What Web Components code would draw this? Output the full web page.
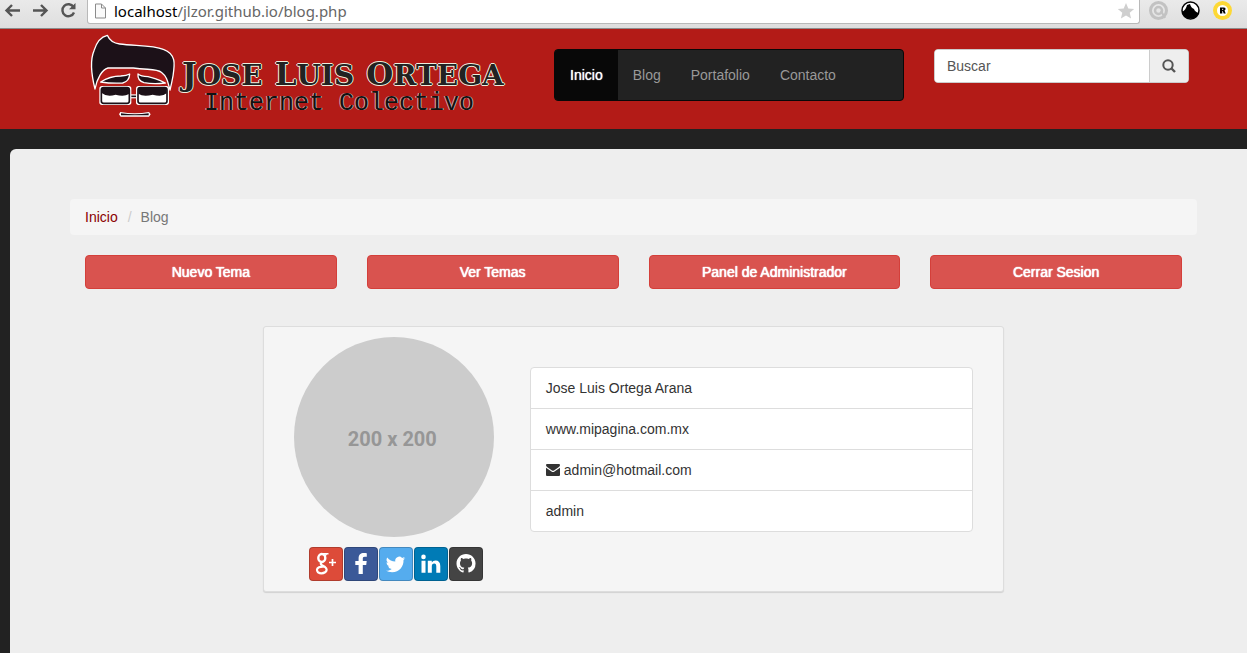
<!DOCTYPE html>
<html lang="es">
<head>
<meta charset="utf-8">
<meta name="viewport" content="width=device-width, initial-scale=1">
<title>Blog - Jose Luis Ortega</title>
<style>
body { margin: 0; background: #222; color: #333; font: 14px/20px "Liberation Sans", Arial, sans-serif; }
</style>
</head>
<body>
<blog-app></blog-app>

<template id="browser-bar">
<style>
:host { display: flex; height: 29px; box-sizing: border-box; background: linear-gradient(#eaeaea, #dedede); border-bottom: 1px solid #8c8c8c; font-family: "Noto Sans", "Open Sans", sans-serif; }
svg { display: block; flex: none; }
.tools { width: 87px; height: 24px; }
.address { flex: 1; display: flex; align-items: center; box-sizing: border-box; height: 24px; padding: 0 4px 2px 6px; background: #fff; border: 1px solid #b9b9b9; border-top: 0; border-radius: 0 0 3px 3px; }
.url { flex: 1; margin-left: 7px; font-size: 15px; line-height: 20px; color: #666; }
b { font-weight: 400; color: #000; }
</style>
<svg class="tools" viewBox="0 0 87 24" fill="none" stroke="#555" stroke-width="2.4" role="img" aria-label="Navegación">
<path d="M6 10.500H20M12 5L6.500 10.500L12 16M33 10.500H47M41 5L46.500 10.500L41 16"/>
<path d="M73.500 7A6 6 0 1 0 74 12.500"/><path d="M75.500 3V9.200H69Z" fill="#555" stroke="none"/>
</svg>
<div class="address">
<svg width="13" height="16" viewBox="0 0 13 16" fill="#fafafa" stroke="#8b8b8b"><path d="M1.500 1H7.500L11.500 5V15H1.500ZM7.500 1V5H11.500"/></svg>
<span class="url"><b>localhost</b>/jlzor.github.io/blog.php</span>
<svg width="18" height="18" viewBox="0 0 18 18"><path d="M9 1l2.300 5.400 5.900.5-4.500 3.800 1.400 5.800L9 13.400l-5.100 3.100 1.400-5.800L.8 6.900l5.900-.5z" fill="#cfcfcf"/></svg>
</div>
<svg width="107" height="24" viewBox="0 0 107 24">
<circle cx="18.500" cy="10.500" r="8" fill="none" stroke="#c2c2c2" stroke-width="3"/>
<circle cx="18.500" cy="10.500" r="3.500" fill="none" stroke="#c2c2c2" stroke-width="2.500"/><path d="M21 11l4 7" stroke="#c2c2c2" stroke-width="2"/>
<circle cx="50.500" cy="10.500" r="8.500" fill="#fff" stroke="#000" stroke-width="1.500"/><path d="M42 12Q46 10 47 5L50 4Q51 8 54 9Q55 12 59 13A9 9 0 0 1 42 12Z" fill="#000"/>
<circle cx="82.500" cy="10.500" r="9.500" fill="#fdd835"/><circle cx="82.500" cy="10.500" r="5.500" fill="#fff"/>
<path d="M80 7.500h4q2 0 1.500 2l-1 1 1.200 3h-2l-.9-2.500h-.5v2.500H80zM82.200 8.800v1.200h1v-1.200z" fill="#000" fill-rule="evenodd"/>
</svg>
</template>

<template id="site-logo">
<style>
:host { display: block; min-width: 0; }
a { display: flex; color: #222; text-decoration: none; white-space: nowrap; }
svg { display: block; flex: none; }
.text { padding-top: 29px; margin-left: 3px; }
.name { display: flex; gap: 12px; height: 34px; font: bold 28px/32px "DejaVu Serif", serif; text-transform: uppercase; text-shadow: 1px 0 #eed, -1px 0 #eed, 0 1px #eed, 0 -1px #eed; }
.name span { display: block; }
.name span::first-letter { font-size: 31px; line-height: 32px; }
.sub { display: block; padding-left: 22px; font: 25px/24px "Liberation Mono", monospace; color: #111; text-shadow: 1px 0 #c9a5a5, -1px 0 #c9a5a5; }
</style>
<a href="#inicio">
<svg width="100" height="100" viewBox="-3 -3 300 300" stroke-linejoin="round" aria-hidden="true">
<path d="M45 177C32 125 30 90 42 62C50 35 64 20 82 16C88 30 101 40 119 42C165 48 218 45 250 58C290 72 284 105 279 138Q275 160 270 180C263 155 262 141 244 127C232 116 210 120 160 114L84 114C66 119 51 145 45 177Z" fill="#1c1118" stroke="#fff" stroke-width="4"/>
<path d="M62 156Q90 138 122 138Q140 137 149 132Q148 154 128 159Q95 161 62 156ZM256 159Q225 144 204 140Q182 139 174 132Q172 152 192 158Q220 163 256 159Z" fill="#1c1118" stroke="#fff" stroke-width="4"/>
<path d="M148 199H174" stroke="#fff" stroke-width="12"/><path d="M145 199H176" stroke="#1c1118" stroke-width="5"/>
<rect x="58" y="168" width="96" height="57" rx="8" fill="#fff"/><rect x="168" y="168" width="99" height="57" rx="8" fill="#fff"/>
<rect x="64" y="173" width="84" height="47" rx="7" fill="#fff" stroke="#1c1118" stroke-width="5"/><rect x="174" y="173" width="87" height="47" rx="7" fill="#fff" stroke="#1c1118" stroke-width="5"/>
<path d="M65 174H147V192Q132 201 107 194Q81 202 65 189ZM175 174H260V190Q247 202 218 194Q190 202 175 191Z" fill="#1c1118"/>
<path d="M121 246Q165 254 207 246L212 253 207 260H122L117 253Z" fill="#fff"/><path d="M123 250Q165 256 206 250V256H123Z" fill="#1c1118"/>
</svg>
<span class="text">
<span class="name"><span>Jose</span><span>Luis</span><span>Ortega</span></span>
<span class="sub">Internet Colectivo</span>
</span>
</a>
</template>

<template id="main-nav">
<style>
nav { display: flex; overflow: hidden; border: 1px solid #080808; border-radius: 4px; background: #222; }
a { padding: 15px; color: #999; text-decoration: none; }
a.active { background: #080808; color: #fff; text-shadow: 0 0 1px #fff; }
</style>
<nav><a class="active" href="#inicio">Inicio</a><a href="#blog">Blog</a><a href="#portafolio">Portafolio</a><a href="#contacto">Contacto</a></nav>
</template>

<template id="search-box">
<style>
form { display: flex; height: 34px; box-sizing: border-box; border: 1px solid #ccc; border-radius: 4px; overflow: hidden; background: #fff; }
input { flex: 1; min-width: 0; border: 0; outline: 0; padding: 0 12px; background: #fff; color: #555; font: inherit; }
input::placeholder { color: #555; opacity: 1; }
button { display: grid; place-items: center; width: 39px; padding: 0; border: 0; border-left: 1px solid #ccc; background: #eee; }
</style>
<form><input type="text" placeholder="Buscar" aria-label="Buscar"><button type="button" aria-label="Ir"><svg width="14" height="14" viewBox="0 0 14 14" fill="none" stroke="#555" stroke-width="2"><circle cx="6" cy="6" r="4.700"/><path d="M9.500 9.500L13 13" stroke-width="2.400"/></svg></button></form>
</template>

<template id="site-header">
<style>
:host { display: block; background: #b31b17; }
.row { display: grid; grid-template-columns: repeat(12, minmax(0, 1fr)); column-gap: 30px; align-items: start; height: 100px; padding: 0 58px 0 79px; }
site-logo { grid-column: span 5; }
main-nav { grid-column: span 4; margin-top: 20px; }
search-box { grid-column: span 3; margin-top: 20px; }
</style>
<div class="row"><site-logo></site-logo><main-nav></main-nav><search-box></search-box></div>
</template>

<template id="bread-crumb">
<style>
:host { display: block; }
ol { display: flex; margin: 0; padding: 8px 15px; list-style: none; background: #f5f5f5; border-radius: 4px; color: #777; }
li + li::before { content: "/"; padding: 0 9px 0 10px; color: #ccc; }
a { color: #8b0000; text-decoration: none; }
</style>
<ol><li><a href="#inicio">Inicio</a></li><li>Blog</li></ol>
</template>

<template id="action-button">
<style>
button { display: block; width: 100%; height: 34px; padding: 0; border: 1px solid #d43f3a; border-radius: 4px; background: #d9534f; color: #fff; font: inherit; text-shadow: 0 0 1px #fff, 0 0 1px #fff; }
</style>
<button type="button"><slot></slot></button>
</template>

<template id="social-link">
<style>
a { display: grid; place-items: center; box-sizing: border-box; width: 34px; height: 34px; border: 1px solid rgba(0,0,0,.2); border-radius: 4px; background: var(--brand); background-clip: border-box; }
::slotted(svg) { display: block; width: 32px; height: 32px; }
</style>
<a href="#social"><slot></slot></a>
</template>

<template id="profile-card">
<style>
:host { display: flex; box-sizing: border-box; padding: 10px 30px; border: 1px solid #ddd; border-radius: 3px; background: #f5f5f5; box-shadow: 0 1px 1px rgba(0,0,0,.12); }
.side { flex: none; width: 200px; margin-right: 36px; }
.avatar { display: grid; place-items: center; width: 200px; height: 200px; border-radius: 50%; background: #ccc; color: #969696; font: bold 20px/24px Roboto, sans-serif; box-sizing: border-box; padding: 4px 3px 0 0; }
.social { display: flex; gap: 1px; margin: 10px 0 0 15px; }
ul { flex: 1; align-self: flex-start; margin: 30px 0 0; padding: 0; list-style: none; border: 1px solid #ddd; border-radius: 4px; background: #fff; overflow: hidden; }
li { display: flex; align-items: center; gap: 4px; padding: 10px 15px; }
li + li { border-top: 1px solid #ddd; }
</style>
<div class="side">
<div class="avatar">200 x 200</div>
<div class="social">
<social-link label="Google+" style="--brand:#dd4b39"><svg viewBox="0 0 32 32" fill="none" stroke="#fff"><ellipse cx="11.800" cy="10" rx="3.500" ry="4" stroke-width="2.400"/><path d="M12 5.700H18.500M15 8Q16 7 16.500 6" stroke-width="1.500"/><path d="M12 14Q9.500 15.800 12 17.200L15 19Q18 21.500 15.500 24Q11.500 26.500 8 24.300Q5.500 21 9 19.200Q11.500 18.300 14 18.600" stroke-width="2.200"/><path d="M19 14.500H26M22.500 11V18" stroke-width="1.700"/></svg></social-link>
<social-link label="Facebook" style="--brand:#3b5998"><svg viewBox="0 0 32 32" fill="#fff"><path d="M21.800 5.300v3.500h-2.100c-1.600 0-1.900.8-1.900 1.900v2.400h3.900l-.5 4h-3.400v9h-4.200v-9h-3.300v-4h3.300v-2.900c0-3.400 2.100-5.200 5.100-5.200 1.500 0 2.700.1 3.100.3z"/></svg></social-link>
<social-link label="Twitter" style="--brand:#55acee"><svg viewBox="0 0 32 32" fill="#fff"><path d="M25.400 9.900a8 8 0 0 1-1.900 2c.4 6-4 12.400-11.400 12.400-2.300 0-4.300-.6-6.100-1.700 2 .2 4.200-.4 5.700-1.700a4 4 0 0 1-3.700-2.700h1.700a4 4 0 0 1-3.100-4c.6.3 1.100.4 1.800.5a4 4 0 0 1-1.200-5.300 11 11 0 0 0 8.100 4.100 4 4 0 0 1 6.800-3.600 8 8 0 0 0 2.500-1 4 4 0 0 1-1.700 2.200 8 8 0 0 0 2.500-1.200z"/></svg></social-link>
<social-link label="LinkedIn" style="--brand:#007bb6"><svg viewBox="0 0 32 32" fill="#fff"><circle cx="8.500" cy="8.900" r="2.300"/><path d="M6.500 12.700h4v12h-4zM12.800 12.700h4v1.700c.8-1.200 2-2 3.800-2 2.900 0 4.700 1.900 4.700 5.500v6.800h-4v-6.300c0-1.800-.6-2.900-2-2.900-1.800 0-2.500 1.300-2.500 2.900v6.300h-4z"/></svg></social-link>
<social-link label="GitHub" style="--brand:#444"><svg viewBox="0 0 32 32" fill="#fff"><g transform="translate(6.500 6) scale(1.190)"><path d="M8 0C3.580 0 0 3.580 0 8c0 3.540 2.290 6.530 5.470 7.590.4.070.55-.17.55-.38 0-.19-.01-.82-.01-1.490-2.010.37-2.530-.49-2.690-.94-.09-.23-.48-.94-.82-1.130-.28-.15-.68-.52-.01-.53.630-.01 1.080.58 1.230.82.720 1.210 1.870.87 2.330.66.070-.52.28-.87.51-1.070-1.780-.2-3.640-.89-3.640-3.950 0-.87.31-1.590.82-2.150-.08-.2-.36-1.020.08-2.120 0 0 .67-.21 2.200.82.640-.18 1.320-.27 2-.27s1.360.09 2 .27c1.530-1.040 2.200-.82 2.200-.82.440 1.100.16 1.920.08 2.120.51.560.82 1.270.82 2.150 0 3.070-1.870 3.750-3.650 3.950.29.250.54.730.54 1.480 0 1.070-.01 1.930-.01 2.200 0 .21.15.46.55.38A8.010 8.010 0 0 0 16 8c0-4.420-3.580-8-8-8z"/></g></svg></social-link>
</div>
</div>
<ul>
<li>Jose Luis Ortega Arana</li>
<li>www.mipagina.com.mx</li>
<li><svg width="14" height="12" viewBox="0 0 14 12" fill="#333" aria-hidden="true"><path d="M1 0H13Q14 0 14 1.300Q14 2.300 12.500 3.300L8 6.500Q7 7.200 6 6.500L1.500 3.300Q0 2.300 0 1.300Q0 0 1 0ZM0 3.800L5.500 7.600Q7 8.600 8.500 7.600L14 3.800V11Q14 12 13 12H1Q0 12 0 11Z"/></svg>admin@hotmail.com</li>
<li>admin</li>
</ul>
</template>

<template id="blog-app">
<style>
:host { display: flex; flex-direction: column; min-height: 100vh; }
main { flex: 1; margin: 20px 0 0 10px; padding: 50px 50px 60px 60px; background: #eee; border-radius: 6px 0 0 0; }
.actions { display: grid; grid-template-columns: repeat(4, minmax(0, 1fr)); gap: 30px; padding: 20px 15px 37px; }
.profile { display: grid; grid-template-columns: repeat(12, minmax(0, 1fr)); }
profile-card { grid-column: 3 / 11; margin: 0 5px; }
</style>
<browser-bar></browser-bar>
<site-header></site-header>
<main>
<bread-crumb></bread-crumb>
<div class="actions"><action-button>Nuevo Tema</action-button><action-button>Ver Temas</action-button><action-button>Panel de Administrador</action-button><action-button>Cerrar Sesion</action-button></div>
<div class="profile"><profile-card></profile-card></div>
</main>
</template>

<script>
class TemplateElement extends HTMLElement {
  constructor() {
    super();
    const root = this.attachShadow({ mode: "open" });
    const base = document.createElement("style");
    base.textContent = ":host { display: block; }";
    root.append(base, document.getElementById(this.localName).content.cloneNode(true));
  }
}
class SocialLink extends TemplateElement {
  connectedCallback() {
    this.shadowRoot.querySelector("a").setAttribute("aria-label", this.getAttribute("label"));
  }
}
customElements.define("social-link", SocialLink);
for (const name of ["browser-bar", "site-logo", "main-nav", "search-box", "site-header", "bread-crumb", "action-button", "profile-card", "blog-app"]) {
  customElements.define(name, class extends TemplateElement {});
}
</script>
</body>
</html>
